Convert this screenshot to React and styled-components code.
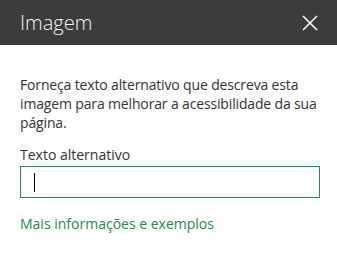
import React from 'react';
import styled, { createGlobalStyle } from 'styled-components';

const GlobalStyle = createGlobalStyle`
  html, body {
    margin: 0;
    padding: 0;
    background: #ffffff;
  }
  body {
    font-family: 'Open Sans', 'Noto Sans', sans-serif;
  }
`;

const Panel = styled.div`
  width: 337px;
  height: 260px;
  background: #ffffff;
  display: flex;
  flex-direction: column;
`;

const Header = styled.div`
  height: 45px;
  background: #3c3c3c;
  display: flex;
  align-items: center;
  justify-content: space-between;
  padding: 0 19px 0 20px;
  box-sizing: border-box;
`;

const Title = styled.h1`
  margin: 0;
  font-size: 20px;
  font-weight: 300;
  color: #f4f4f4;
  line-height: 1;
`;

const CloseButton = styled.button`
  width: 16px;
  height: 16px;
  padding: 0;
  border: none;
  background: transparent;
  display: flex;
  cursor: pointer;
`;

const Body = styled.div`
  padding: 30px 17px 0 20px;
  display: flex;
  flex-direction: column;
`;

const Description = styled.p`
  margin: 0;
  font-size: 14px;
  line-height: 19px;
  letter-spacing: -0.15px;
  color: #333333;
`;

const Label = styled.label`
  margin-top: 13px;
  font-size: 14px;
  line-height: 19px;
  color: #333333;
`;

const InputWrap = styled.div`
  position: relative;
  margin-top: 2px;
`;

const TextInput = styled.input`
  display: block;
  width: 300px;
  height: 32px;
  box-sizing: border-box;
  border: 1px solid #2b8a4f;
  padding: 0 13px;
  font-size: 14px;
  font-family: inherit;
  color: #333333;
  caret-color: transparent;
  outline: none;
`;

const Caret = styled.span`
  position: absolute;
  left: 14px;
  top: 7px;
  width: 1px;
  height: 19px;
  background: #000;
`;

const MoreLink = styled.a`
  margin-top: 16px;
  font-size: 14px;
  line-height: 19px;
  color: #1f8a47;
  text-decoration: none;
`;

export default function App() {
  return (
    <>
      <GlobalStyle />
      <Panel>
        <Header>
          <Title>Imagem</Title>
          <CloseButton aria-label="Fechar">
            <svg width="16" height="16" viewBox="0 0 16 16">
              <path d="M1 1L15 15M15 1L1 15" stroke="#ffffff" strokeWidth="1.5" fill="none" />
            </svg>
          </CloseButton>
        </Header>
        <Body>
          <Description>
            Forneça texto alternativo que descreva esta imagem para melhorar a acessibilidade da sua página.
          </Description>
          <Label htmlFor="alt">Texto alternativo</Label>
          <InputWrap>
            <TextInput id="alt" />
            <Caret />
          </InputWrap>
          <MoreLink href="#">Mais informações e exemplos</MoreLink>
        </Body>
      </Panel>
    </>
  );
}
